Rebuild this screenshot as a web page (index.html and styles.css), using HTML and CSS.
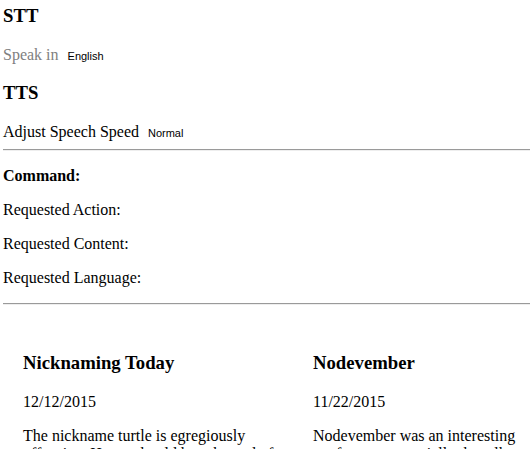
FILE: index.html
```html
<!DOCTYPE html>
<html>
<head>
<meta charset="utf-8">
<link rel="stylesheet" href="styles.css">
</head>
<body>
<div class="app">
  <h3 class="first">STT</h3>
  <div class="row"><span class="muted">Speak in</span><span class="sel">English</span></div>
  <h3>TTS</h3>
  <div class="row"><span>Adjust Speech Speed</span><span class="sel">Normal</span></div>
  <hr>
  <p><strong>Command:</strong></p>
  <p>Requested Action:</p>
  <p>Requested Content:</p>
  <p>Requested Language:</p>
  <hr>
  <section class="posts">
    <article>
      <h3>Nicknaming Today</h3>
      <p>12/12/2015</p>
      <p>The nickname turtle is egregiously offensive. Henry should be ashamed of himself for this.</p>
    </article>
    <article>
      <h3>Nodevember</h3>
      <p>11/22/2015</p>
      <p>Nodevember was an interesting conference, especially the talks on streams.</p>
    </article>
  </section>
</div>
</body>
</html>
```
FILE: styles.css
```css
html, body {
  margin: 0;
  padding: 0;
  background: #fff;
  overflow: hidden;
}
body {
  font-family: "Liberation Serif", "Times New Roman", serif;
  font-size: 16px;
  color: #000;
}
.app {
  padding: 5px 0 0 3px;
}
h3 {
  font-size: 18.72px;
  margin: 18.72px 0;
}
h3.first {
  margin-top: 0;
}
p {
  margin: 16px 0;
}
.row {
  display: flex;
  align-items: baseline;
}
.muted {
  color: #808080;
}
.sel {
  font-family: "Liberation Sans", Arial, sans-serif;
  font-size: 11px;
  margin-left: 9px;
}
hr {
  margin: 8px 0;
  border: 0;
  border-top: 1px solid #9a9a9a;
  border-bottom: 1px solid #eeeeee;
  height: 0;
}
.posts {
  padding: 20px 0 20px 20px;
  display: grid;
  grid-template-columns: 268px 268px;
  column-gap: 22px;
  overflow: hidden;
}
```
